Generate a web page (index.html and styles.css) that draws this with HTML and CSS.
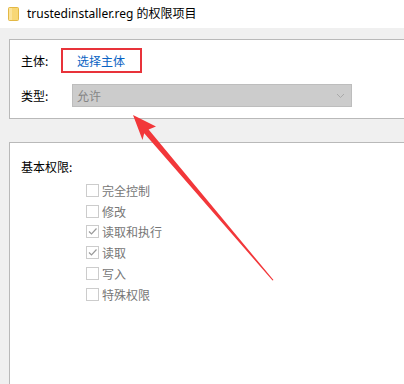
FILE: index.html
```html
<!DOCTYPE html>
<html lang="zh-CN">
<head>
<meta charset="utf-8">
<title>trustedinstaller.reg 的权限项目</title>
<link rel="stylesheet" href="styles.css">
</head>
<body>
<div class="titlebar">
  <svg class="folder" width="11" height="14" viewBox="0 0 11 14"><rect x="0.5" y="0.5" width="10" height="13" rx="1" fill="#f8d775" stroke="#e3b845"/><rect x="1" y="1" width="3" height="12" fill="#fbe39a"/></svg>
  <span class="title">trustedinstaller.reg 的权限项目</span>
</div>
<div class="content">
  <div class="panel top-panel">
    <div class="row principal">
      <span class="label label-short">主体:</span>
      <span class="highlight"><a class="link">选择主体</a></span>
    </div>
    <div class="row type">
      <span class="label label-long">类型:</span>
      <div class="combo">
        <span class="combo-text">允许</span>
        <svg class="chev" width="9" height="6" viewBox="0 0 9 6"><path d="M1 1 L4.5 4.5 L8 1" fill="none" stroke="#a9a9a9" stroke-width="1"/></svg>
      </div>
    </div>
  </div>
  <div class="panel perm-panel">
    <div class="section-title">基本权限:</div>
    <ul class="perms">
      <li><span class="box"></span>完全控制</li>
      <li><span class="box"></span>修改</li>
      <li><span class="box checked"><svg width="11" height="11" viewBox="0 0 11 11"><path d="M2 5.5 L4.5 8 L9.5 2.5" fill="none" stroke="#9a9a9a" stroke-width="1.2"/></svg></span>读取和执行</li>
      <li><span class="box checked"><svg width="11" height="11" viewBox="0 0 11 11"><path d="M2 5.5 L4.5 8 L9.5 2.5" fill="none" stroke="#9a9a9a" stroke-width="1.2"/></svg></span>读取</li>
      <li><span class="box"></span>写入</li>
      <li><span class="box"></span>特殊权限</li>
    </ul>
  </div>
</div>
<svg class="arrow" width="404" height="384" viewBox="0 0 404 384">
  <polygon points="133,115 156,126.5 148.6,129.5 273.5,280 272.5,280.5 144.2,133.2 142.5,140" fill="#f2373a"/>
</svg>
</body>
</html>
```

FILE: styles.css
```css
* { box-sizing: border-box; }
html, body { margin: 0; padding: 0; }
body {
  width: 404px;
  height: 384px;
  overflow: hidden;
  background: #f0f0f0;
  font-family: "Segoe UI", "Noto Sans", "Noto Sans CJK SC", sans-serif;
  font-size: 12px;
  color: #000;
  position: relative;
}
.titlebar {
  height: 28px;
  background: #fff;
  display: flex;
  align-items: center;
  padding-left: 8px;
  gap: 8px;
}
.folder { display: block; margin-top: -1px; }
.title {
  font-family: "Noto Sans", "Noto Sans CJK SC", sans-serif;
  font-size: 12px;
  color: #000;
  line-height: 16px;
}
.content {
  padding: 11px 0 0 9px;
}
.panel {
  background: #fff;
  border: 1px solid #b9b9b9;
  border-right: none;
  margin-right: -2px;
}
.top-panel {
  height: 80px;
  padding: 8px 0 0 11px;
  display: flex;
  flex-direction: column;
  gap: 11px;
}
.row {
  display: flex;
  align-items: center;
}
.label {
  font-family: "Noto Sans CJK SC", sans-serif;
  font-size: 12px;
  line-height: 16px;
}
.label-short { width: 40px; }
.label-long { width: 51px; }
.highlight {
  display: inline-flex;
  align-items: center;
  height: 25px;
  width: 81px;
  border: 2px solid #e8333a;
  padding-left: 14px;
}
.link {
  font-family: "Noto Sans CJK SC", sans-serif;
  color: #0a63c3;
  font-size: 12px;
  line-height: 16px;
}
.combo {
  width: 280px;
  height: 23px;
  background: #cccccc;
  border: 1px solid #bdbdbd;
  display: flex;
  align-items: center;
  justify-content: space-between;
  padding: 0 6px 0 4px;
}
.combo-text {
  font-family: "Noto Sans CJK SC", sans-serif;
  color: #858585;
  font-size: 12px;
}
.chev { display: block; }
.perm-panel {
  margin-top: 23px;
  height: 260px;
  padding: 13px 0 0 11px;
}
.section-title {
  font-family: "Noto Sans CJK SC", sans-serif;
  line-height: 21px;
}
.perms {
  list-style: none;
  margin: 3px 0 0 0;
  padding: 0 0 0 65px;
}
.perms li {
  height: 20.8px;
  display: flex;
  align-items: center;
  font-family: "Noto Sans CJK SC", sans-serif;
  color: #767676;
  font-size: 12px;
}
.box {
  width: 13px;
  height: 13px;
  border: 1px solid #cccccc;
  margin-right: 3px;
  display: flex;
  align-items: center;
  justify-content: center;
}
.box svg { display: block; }
.arrow {
  position: absolute;
  left: 0;
  top: 0;
  pointer-events: none;
}
```
